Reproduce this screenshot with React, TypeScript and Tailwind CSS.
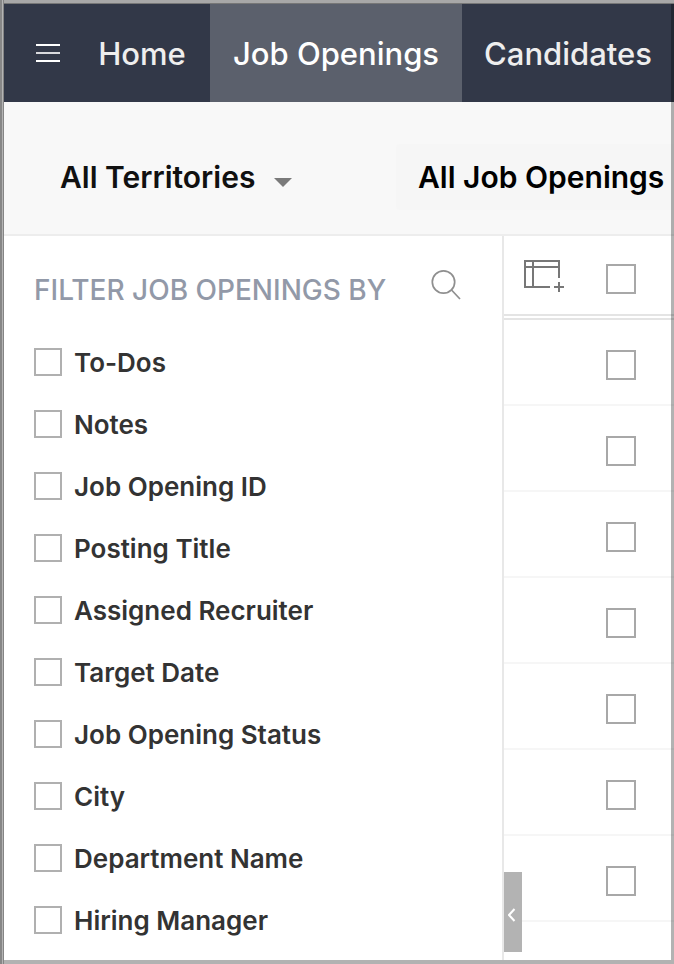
import React from 'react';

const FILTERS = [
  'To-Dos',
  'Notes',
  'Job Opening ID',
  'Posting Title',
  'Assigned Recruiter',
  'Target Date',
  'Job Opening Status',
  'City',
  'Department Name',
  'Hiring Manager',
];

const ROWS = [1, 2, 3, 4, 5, 6, 7];

interface CheckboxProps {
  id: string;
  label?: string;
  className: string;
}

const Checkbox: React.FC<CheckboxProps> = ({ id, label, className }) => (
  <input
    id={id}
    type="checkbox"
    aria-label={label}
    className={`block shrink-0 appearance-none border-2 bg-white checked:bg-[#6b7280] ${className}`}
  />
);

const NavBar: React.FC = () => (
  <nav className="flex h-[98px] overflow-hidden bg-[#323848] text-[31px] leading-10 font-medium text-[#eeeeee]">
    <button type="button" aria-label="Menu" className="flex w-[70px] shrink-0 items-center pl-8">
      <svg width="24" height="18" viewBox="0 0 24 18" aria-hidden="true">
        <path d="M0 1h24M0 17h24" stroke="#ffffff" strokeWidth="2" />
        <path d="M0 9h24" stroke="#d9dade" strokeWidth="2" />
      </svg>
    </button>
    <a href="#home" className="flex w-[136px] shrink-0 items-center justify-center pt-0.5">Home</a>
    <a href="#job-openings" aria-current="page" className="flex w-[252px] shrink-0 items-center justify-center bg-[#5b606c] pt-0.5 text-white">
      Job Openings
    </a>
    <a href="#candidates" className="flex w-[212px] shrink-0 items-center justify-center pt-0.5">Candidates</a>
  </nav>
);

const ViewBar: React.FC = () => (
  <div className="flex h-[134px] overflow-hidden border-b-2 border-[#ededed] bg-[#f8f8f8] pt-[42px] text-[30px] font-semibold">
    <div className="relative ml-14 h-[66px] w-[240px] shrink-0">
      <select aria-label="Territory" className="h-full w-full appearance-none bg-transparent text-[#111111]">
        <option>All Territories</option>
      </select>
      <svg className="pointer-events-none absolute top-[34px] right-[8px]" width="18" height="9" viewBox="0 0 18 9" aria-hidden="true">
        <path d="M0 0h18L9 9z" fill="#7a7a7a" />
      </svg>
    </div>
    <select aria-label="View" className="ml-[96px] h-[66px] w-[290px] shrink-0 appearance-none rounded bg-[#f6f6f6] pl-[22px] text-black">
      <option>All Job Openings</option>
    </select>
  </div>
);

const FilterPanel: React.FC = () => (
  <aside className="w-[500px] shrink-0 border-r-2 border-[#e8e8e8] pt-8 pl-[30px]">
    <div className="flex items-start justify-between pr-[40px]">
      <h2 className="mt-0.5 text-[28px] leading-10 font-medium text-[#9299a8]">FILTER JOB OPENINGS BY</h2>
      <button type="button" aria-label="Search filters">
        <svg width="32" height="32" viewBox="0 0 32 32" fill="none" stroke="#8f8f8f" strokeWidth="1.7" aria-hidden="true">
          <circle cx="13.500" cy="14" r="11.200" />
          <path d="M21.500 22l8.500 9" />
        </svg>
      </button>
    </div>
    <ul className="mt-[21px]">
      {FILTERS.map((name, i) => (
        <li key={name} className="flex h-[62px] items-center">
          <Checkbox id={`filter-${i}`} className="size-7 border-[#b0b0b0]" />
          <label htmlFor={`filter-${i}`} className="pt-0.5 pl-3 text-[26px] leading-9 font-semibold text-[#333333]">{name}</label>
        </li>
      ))}
    </ul>
  </aside>
);

const JobTable: React.FC = () => (
  <div className="relative min-w-0 flex-1">
    <table className="w-full table-fixed border-separate border-spacing-0">
      <thead>
        <tr className="h-[84px] align-top">
          <th className="w-[102px] border-b-6 border-double border-[#e4e4e4] pt-6 pl-5">
            <button type="button" aria-label="Add column" className="block">
              <svg width="40" height="33" viewBox="0 0 40 33" fill="none" stroke="#777777" strokeWidth="2" aria-hidden="true">
                <path d="M26 27H1V1h34v17M1 7h34M9 1v26" />
                <path d="M30 27h10M35 22v10" />
              </svg>
            </button>
          </th>
          <th className="border-b-6 border-double border-[#e4e4e4] pt-7">
            <Checkbox id="select-all" label="Select all job openings" className="size-[30px] border-[#a8a8a8]" />
          </th>
        </tr>
      </thead>
      <tbody>
        {ROWS.map((row) => (
          <tr key={row} className="h-[86px] align-top">
            <td className="border-b-2 border-[#f6f6f6]" />
            <td className="border-b-2 border-[#f6f6f6] pt-[30px]">
              <Checkbox id={`row-${row}`} label={`Select job opening ${row}`} className="size-[30px] border-[#a8a8a8]" />
            </td>
          </tr>
        ))}
      </tbody>
    </table>
    <button type="button" aria-label="Collapse filters" className="absolute bottom-2 left-0 flex h-20 w-[18px] items-center bg-[#b3b3b3] pt-1.5 pl-1">
      <svg width="8" height="14" viewBox="0 0 8 14" fill="none" stroke="#ffffff" strokeWidth="2" aria-hidden="true">
        <path d="M6.500 1L1 7L6.500 13" />
      </svg>
    </button>
  </div>
);

export default function App() {
  return (
    <div className="relative flex min-h-screen flex-col overflow-hidden bg-white pt-1 pb-1 pl-1 font-['Inter','Liberation_Sans',sans-serif]">
      <NavBar />
      <ViewBar />
      <main className="flex flex-1">
        <FilterPanel />
        <JobTable />
      </main>

      {/* Window frame */}
      <div className="pointer-events-none absolute inset-0 border-r-3 border-b-4 border-black/30" />
      <div className="pointer-events-none absolute inset-x-0 top-0 h-1 border-b border-[#777777] bg-[#a8a8a8]" />
      <div className="pointer-events-none absolute inset-y-0 left-0 flex w-1 border-r border-[#858585] bg-[#b4b4b4]">
        <div className="w-0.5 bg-[#878787]" />
      </div>
    </div>
  );
}
